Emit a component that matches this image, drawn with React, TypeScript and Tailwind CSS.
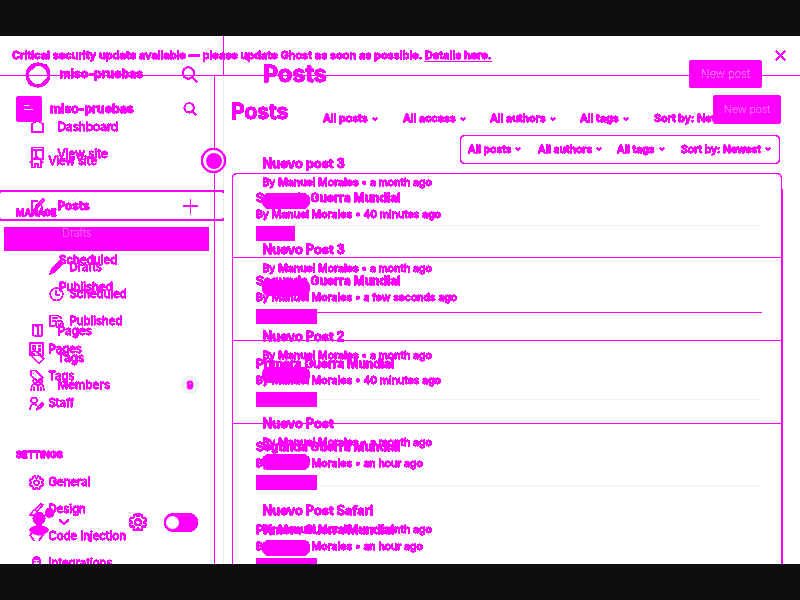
import React from "react";

const M = "#ff00ff";

type IconProps = { name: string; className?: string };

const paths: Record<string, React.ReactNode> = {
  home: <path d="M1.5 13.5v-8L7.5 1l6 4.5v8z" />,
  browser: <path d="M1.5 1.5h12v12h-12zM1.5 4.5h12M6 5v8.5" />,
  compose: <path d="M8 3H1.5v11H12V8M5 11l1-3 7-7 1.5 1.5-7 7z" />,
  house: <path d="M1 8.5 7.5 2 14 8.5M3 7v7h3v-4h3v4h3V7M.5 8.5h3M11.5 8.5h3" />,
  pages: <path d="M2.5 2h9.5v11H9M2.5 2 8 3.5v10.5l-5.5-1.5zM3 2v11" />,
  tag: <path d="M1.5 1.5h5l7.5 7.5-5 5-7.5-7.5zM4.5 4.5h.5" />,
  members: <path d="M5 2a2 2 0 1 1 0 4 2 2 0 0 1 0-4zM10.5 2a2 2 0 1 1 0 4 2 2 0 0 1 0-4zM1 14c0-5 2-7 4-7s3 2 3 7c0-5 1-7 3-7s3 2 3 7M4 10v4M11 10v4" />,
  search: <path d="M6.5 1.2a5.2 5.2 0 1 1 0 10.4 5.2 5.2 0 0 1 0-10.4zM10.3 10.3l4.2 4.2" />,
  plus: <path d="M7.5 0v15M0 7.5h15" />,
  pencil: <><path d="M1.5 13.5 3 9l8.5-8 2 2L5 12z" fill={M} strokeWidth="1.8" /><path d="m1 14 3-2" /></>,
  clock: <path d="M7.5 1a6.5 6.5 0 1 1 0 13 6.5 6.5 0 0 1 0-13zM7 3.5V8h4" />,
  published: <path d="M12 5V4L9 1.5H1v11h5M3 4.5h6M3 7.5h4M10.5 7a3.5 3.5 0 1 1 0 7 3.5 3.5 0 0 1 0-7zm-1.5 3 1.5 1.5 2-2" />,
  news: <path d="M1 1h13v13H1zM3.5 4h3v3h-3zM9 4h3M9 7h3M3.5 9.5h3M9 9.5h3M3.5 12h2M9 12h3" />,
  staff: <path d="M5 1.5a3 3 0 1 1 0 6 3 3 0 0 1 0-6zM1 14c0-4 2-6 4-6l3 2M8 14l1-3 4.5-4L15 8.5 10.5 13z" />,
  brush: <path d="M6 8l6-6.5 2 1.5-6 7zM6 8c-4 0-2 3-5 5.5 3 .5 7 .5 7-3.5" />,
  code: <path d="M5 2 1 7.5 5 13M10 2l4 5.5L10 13" />,
  ghost: <path d="M1 14l3-3V6c0-5 7-5 7 0v5l3 3M5.5 7h1M8.5 7h1M5 4.5h5M5 10h5" />,
  gear: <><path d="m6.2 1 .5 1.7h1.6L8.8 1l2.3.8-.3 1.8 1.1 1 1.7-.5 1 2.3-1.6 1v1.2l1.6.9-1 2.3-1.7-.4-1.1 1.1.3 1.6-2.3.9-.9-1.5H6.8l-.7 1.5-2.4-.9.3-1.7-1-1-1.7.4-.9-2.3L2 8.6V7.3L.4 6.4l1-2.3 1.7.4 1-1-.3-1.7z" /><circle cx="7.5" cy="8" r="2.5" /></>,
  chevron: <path d="M1.5 5l6 5.5 6-5.5" />,
  close: <path d="m1 1 13 13M14 1 1 14" />,
};

function Icon({ name, className = "size-[15px]" }: IconProps) {
  return (
    <svg viewBox="0 0 15 15.5" fill="none" stroke={M} strokeWidth="1.15" className={"shrink-0 " + className}>
      {paths[name]}
    </svg>
  );
}

function Filters({ items, className }: { items: [string, string][]; className: string }) {
  return (
    <div className={"flex items-center whitespace-nowrap font-semibold " + className}>
      {items.map(([label, w]) => (
        <div key={label} className={"flex shrink-0 items-center gap-[4px] " + w}>
          {label}
          <Icon name="chevron" className="size-[6px] [stroke-width:4]" />
        </div>
      ))}
    </div>
  );
}

function OldNav({ icon, label, children }: { icon: string; label: string; children?: React.ReactNode }) {
  return (
    <div className="flex h-[27px] shrink-0 items-center pl-[30px]">
      <Icon name={icon} />
      <span className="ml-[12.5px] flex-1 pt-[2px]">{label}</span>
      {children}
    </div>
  );
}

function WideLayer() {
  const posts = ["Nuevo post 3", "Nuevo Post 3", "Nuevo Post 2", "Nuevo Post", "Nuevo Post Safari"];
  return (
    <div className="col-start-1 row-start-1 flex h-[528px] overflow-hidden">
      <aside className="flex w-[223px] flex-col text-[11.8px] leading-none">
        <div className="flex h-[77px] shrink-0 items-center pl-[25px] text-[12.2px] font-bold">
          <svg viewBox="0 0 26 26" className="size-[26px]" fill="none" stroke={M}>
            <circle cx="13" cy="13" r="10.8" strokeWidth="2.8" />
            <path d="M4 8 10 3M3 18l4 5M20 3l4 6M17 23l6-6" strokeWidth="3" />
          </svg>
          <span className="ml-[8.5px] flex-1">miso-pruebas</span>
          <Icon name="search" className="mr-[25px] size-[17px] [stroke-width:1.4]" />
        </div>
        <OldNav icon="home" label="Dashboard" />
        <OldNav icon="browser" label="View site" />
        <div className="relative mt-[23px] flex h-[31px] w-[224px] shrink-0 items-center border-y-2 border-[#ff00ff] pl-[30px]">
          <Icon name="compose" />
          <span className="ml-[12.5px] flex-1 pt-[2px] font-bold">Posts</span>
          <Icon name="plus" className="mr-[26px] mt-px size-[15px] [stroke-width:1.2]" />
          <div className="absolute left-0 top-0 h-px w-px bg-[#ff00ff]" />
          <div className="absolute bottom-0 left-0 h-px w-px bg-[#ff00ff]" />
          <div className="absolute right-0 top-0 h-px w-[2px] bg-[#ff00ff]" />
          <div className="absolute bottom-0 right-0 h-px w-[2px] bg-[#ff00ff]" />
        </div>
        <div className="h-[26px] shrink-0" />
        <div className="flex h-[27px] shrink-0 items-center pl-[59px] text-[11.6px]">Scheduled</div>
        <div className="flex h-[27px] shrink-0 items-center pl-[59px] text-[11.6px]">Published</div>
        <div className="h-[16px] shrink-0" />
        <OldNav icon="pages" label="Pages" />
        <OldNav icon="tag" label="Tags" />
        <OldNav icon="members" label="Members">
          <span className="mr-[24px] flex size-[18px] items-center justify-center rounded-full bg-[#f1f3f4] text-[10px] font-extrabold [-webkit-text-stroke:1px_#ff00ff]">9</span>
        </OldNav>
        <div className="mt-[110px] flex h-[28px] shrink-0 items-center pl-[25px]">
          <svg viewBox="0 0 28 28" className="size-[28px] overflow-visible">
            <circle cx="14" cy="14" r="13" fill="none" stroke="#f5f5f5" />
            <circle cx="14" cy="10.5" r="6.3" fill={M} />
            <circle cx="24.5" cy="5" r="4.7" fill={M} />
            <path d="M4 22c4-6 16-6 20 0-4 7-16 7-20 0z" fill={M} />
          </svg>
          <Icon name="chevron" className="ml-[5px] size-[12px] [stroke-width:2.2]" />
          <Icon name="gear" className="ml-[59px] size-[18px] [stroke-width:1.4]" />
          <div className="ml-[17px] flex h-[19px] w-[34px] items-center rounded-full bg-[#ff00ff] pl-[2px]">
            <div className="size-[13px] rounded-full bg-white" />
          </div>
        </div>
      </aside>
      <div className="flex w-px flex-col">
        <div className="h-[39px] bg-[#ff00ff]" />
        <div className="flex-1 bg-[#e8eaeb]" />
      </div>
      <main className="flex flex-1 flex-col pl-[38px] pr-[38px]">
        <header className="flex h-[76px] shrink-0 items-center justify-between text-[23.4px] font-bold">
          <span className="pl-px">Posts</span>
          <div className="flex h-[28px] w-[73px] items-center justify-center rounded-[3px] bg-[#ff00ff] text-[11.2px] font-extralight text-white/80 [-webkit-text-stroke:0]">New post</div>
        </header>
        <Filters className="h-[14px] pl-[61px] text-[10.7px]" items={[["All posts", "w-[80px]"], ["All access", "w-[87px]"], ["All authors", "w-[90px]"], ["All tags", "w-[73px]"]]} />
        <div className="-mt-[14px] flex h-[14px] items-center">
          <div className="ml-[392px] w-[59px] overflow-hidden whitespace-nowrap text-[10.7px] font-semibold leading-[14px]">Sort by: Newest</div>
        </div>
        <div className="mt-[23px] flex flex-col">
          {posts.map((title, i) => (
            <div key={title} className={"flex shrink-0 flex-col border-b " + (i === 1 ? "h-[87px] border-[#ff00ff]" : i === 0 ? "h-[77px] border-[#f1f2f3]" : "h-[86.7px] border-[#f1f2f3]")}>
              <div className={"flex h-[30px] shrink-0 items-center pl-[0.5px] text-[12.75px] font-bold " + (i === 0 ? "" : "mt-[9px]")}>{title}</div>
              <div className="flex h-[8px] shrink-0 items-center whitespace-pre pl-[0.5px] text-[10.45px] font-medium">By <span className="font-semibold">Manuel Morales</span> • a month ago</div>
              <div className={"h-[16px] w-[48px] shrink-0 rounded-full bg-[#ff00ff] " + (i === 0 ? "mt-[6px]" : "mt-[7px]")} />
            </div>
          ))}
        </div>
      </main>
    </div>
  );
}

function NewNav({ icon, label }: { icon: string; label: string }) {
  return (
    <div className="flex h-[26.9px] shrink-0 items-center pl-[28.5px]">
      <Icon name={icon} />
      <span className="ml-[5px] pt-px">{label}</span>
    </div>
  );
}

function SubNav({ icon, label }: { icon: string; label: string }) {
  return (
    <div className="flex h-[26.9px] shrink-0 items-center pl-[49px]">
      <Icon name={icon} />
      <span className="ml-[5.5px] pt-px">{label}</span>
    </div>
  );
}

function CompactLayer() {
  const posts: [string, string][] = [
    ["Segunda Guerra Mundial", "40 minutes ago"],
    ["Segunda Guerra Mundial", "a few seconds ago"],
    ["Primera Guerra Mundial", "40 minutes ago"],
    ["Segunda Guerra Mundial", "an hour ago"],
    ["Primera Guerra Mundial", "an hour ago"],
  ];
  return (
    <div className="col-start-1 row-start-1 flex h-[528px] flex-col overflow-hidden">
      <div className="flex h-[40px] shrink-0 items-center justify-between border-b border-[#ff00ff] pl-[12px] pr-[14.5px] text-[11px] font-semibold">
        <div className="whitespace-nowrap pb-px">Critical security update available — please update Ghost as soon as possible. <span className="underline underline-offset-2">Details here.</span></div>
        <Icon name="close" className="size-[11px] [stroke-width:2.2]" />
      </div>
      <div className="flex flex-1 overflow-hidden">
        <aside className="relative flex w-[214px] shrink-0 flex-col text-[11.4px] leading-none">
          <div className="mt-[19px] flex h-[28px] shrink-0 items-center pl-[16px] text-[12.2px] font-bold">
            <div className="flex size-[26px] flex-col items-start justify-center gap-[3px] rounded-[3px] bg-[#ff00ff] pb-[4px] pl-[8px]">
              <div className="h-px w-[5px] bg-white" />
              <div className="h-px w-[9px] bg-white" />
            </div>
            <span className="ml-[8px] flex-1">miso-pruebas</span>
            <Icon name="search" className="mr-[17px] size-[14px] [stroke-width:1.5]" />
          </div>
          <div className="h-[25px] shrink-0" />
          <NewNav icon="house" label="View site" />
          <div className="mt-[32px] flex h-[12px] shrink-0 items-center pl-[16px] text-[9px] font-bold">MANAGE</div>
          <div className="ml-[4px] mt-[8px] flex h-[24px] w-[205px] shrink-0 items-start rounded-[2px] bg-[#ff00ff] pl-[58px] pt-px text-[11px] font-extralight text-white/60 [-webkit-text-stroke:0]">Drafts</div>
          <div className="h-[3px] shrink-0" />
          <SubNav icon="pencil" label="Drafts" />
          <SubNav icon="clock" label="Scheduled" />
          <SubNav icon="published" label="Published" />
          <div className="h-[1.5px] shrink-0" />
          <NewNav icon="news" label="Pages" />
          <NewNav icon="tag" label="Tags" />
          <NewNav icon="staff" label="Staff" />
          <div className="mt-[31.5px] flex h-[12px] shrink-0 items-center pl-[16px] text-[9.3px] font-bold">SETTINGS</div>
          <div className="h-[8.5px] shrink-0" />
          <NewNav icon="gear" label="General" />
          <NewNav icon="brush" label="Design" />
          <NewNav icon="code" label="Code injection" />
          <NewNav icon="ghost" label="Integrations" />
          <div className="absolute left-[201px] top-[72px] flex size-[25px] items-center justify-center rounded-full border-2 border-[#ff00ff] bg-white">
            <div className="size-[16px] rounded-full bg-[#ff00ff]" />
          </div>
        </aside>
        <div className="-z-10 w-px bg-[#ff00ff]" />
        <main className="flex flex-1 flex-col pl-[16px]">
          <header className="mt-[19px] flex h-[29px] shrink-0 items-center justify-between pr-[19px] text-[21px] font-bold">
            <span className="pt-[4px]">Posts</span>
            <div className="flex h-[29px] w-[68px] items-center justify-center rounded-[3px] bg-[#ff00ff] text-[10.6px] font-extralight text-white/70 [-webkit-text-stroke:0]">New post</div>
          </header>
          <div className="ml-[229px] mt-[11px] h-[29px] w-[320px] shrink-0 rounded-[4px] border border-[#ff00ff]">
            <Filters className="h-[27px] pl-[7px] text-[10.4px]" items={[["All posts", "w-[70px]"], ["All authors", "w-[79px]"], ["All tags", "w-[64px]"], ["Sort by: Newest", "w-[98px]"]]} />
          </div>
          <div className="ml-px mt-[9px] flex h-[430px] w-[550px] shrink-0 flex-col rounded-[5px] border border-[#ff00ff] shadow-[1px_14px_0_0_#ff00ff]">
            {posts.map(([title, time], i) => (
              <div key={i} className={"flex shrink-0 flex-col pl-[23px] " + (i === 0 ? "h-[84px] border-b border-[#ff00ff]" : i < 3 ? "h-[83px] border-b border-[#ff00ff]" : "h-[83px]")}>
                <div className={"flex h-[16px] shrink-0 items-center text-[11.95px] font-bold " + (i === 0 ? "mt-[16px]" : "mt-[15px]")}>{title}</div>
                <div className="flex h-[18px] shrink-0 items-center whitespace-pre text-[10.45px] font-medium">By <span className="font-semibold">Manuel Morales</span> • {time}</div>
                <div className={"mt-[2px] h-[15px] shrink-0 rounded-[2px] bg-[#ff00ff] " + (i === 0 ? "w-[39px]" : "w-[61px]")} />
              </div>
            ))}
          </div>
        </main>
      </div>
    </div>
  );
}

export default function App() {
  return (
    <div className="flex h-[600px] w-[800px] flex-col overflow-hidden bg-[#0e0e0e] py-[36px] font-['Inter',sans-serif] text-[#ff00ff] [-webkit-text-stroke:0.45px_#ff00ff]">
      <svg width="0" height="0" className="absolute">
        <filter id="solid" colorInterpolationFilters="sRGB" x="0" y="0" width="1" height="1">
          <feComponentTransfer>
            <feFuncA type="linear" slope="11" intercept="-1" />
          </feComponentTransfer>
        </filter>
      </svg>
      <div className="h-[528px] shrink-0 bg-white">
        <div className="grid h-[528px] grid-cols-[800px] grid-rows-[528px] overflow-hidden [filter:url(#solid)]">
          <WideLayer />
          <CompactLayer />
        </div>
      </div>
    </div>
  );
}
